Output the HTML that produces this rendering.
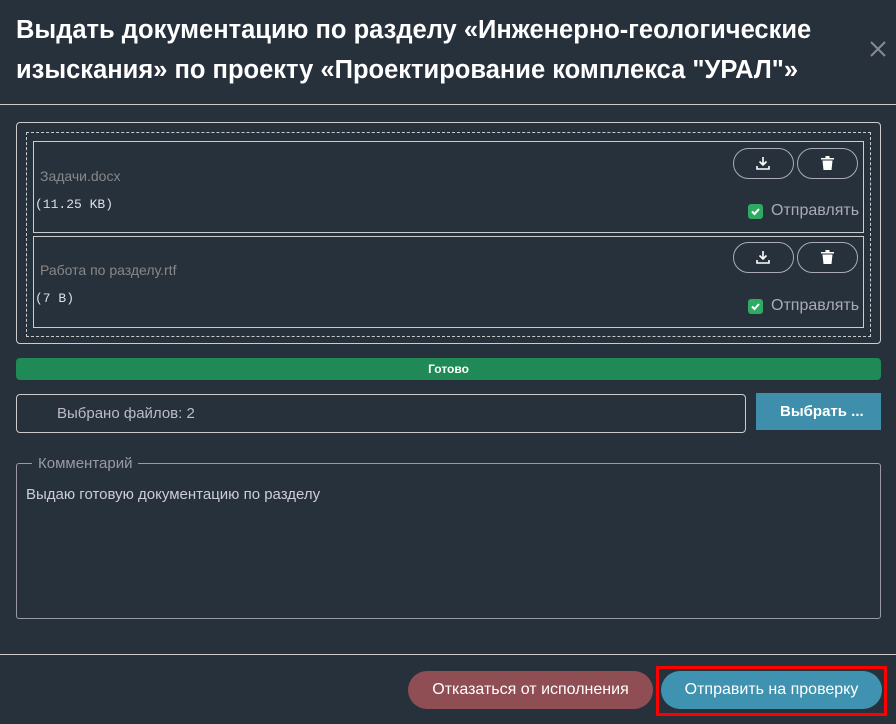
<!DOCTYPE html><html><head><style>
body{margin:0;width:896px;height:724px;background:#27313b;font-family:"Liberation Sans",sans-serif;position:relative;overflow:hidden;color:#fff}
.a{position:absolute;box-sizing:border-box}
.t{left:16px;top:10px;font-size:25.5px;font-weight:bold;line-height:40px;color:#fff;width:840px}
.pill{border:1px solid #aab;border-radius:16px;width:61px;height:31px}
.chk{width:15px;height:15px;background:#2eaa62;border-radius:3px}
.m{font-family:"Liberation Mono",monospace;font-size:13px;color:#dde}
</style></head><body>
<div class="a t">Выдать документацию по разделу «Инженерно-геологические изыскания» по проекту «Проектирование комплекса "УРАЛ"»</div>
<svg class="a" style="left:870px;top:41px" width="16" height="16"><path d="M1 1L15 15M15 1L1 15" stroke="#889" stroke-width="2"/></svg>
<div class="a" style="left:0;top:104px;width:896px;height:1px;background:#ccc"></div>
<div class="a" style="left:16px;top:122px;width:865px;height:222px;border:1px solid #ccc;border-radius:4px"></div>
<div class="a" style="left:26px;top:132px;width:845px;height:205px;border:1px dashed #ccc"></div>
<div class="a" style="left:33px;top:141px;width:831px;height:92px;border:1px solid #ccc"></div>
<div class="a" style="left:33px;top:236px;width:831px;height:92px;border:1px solid #ccc"></div>
<div class="a" style="left:40px;top:168px;font-size:14px;color:#888">Задачи.docx</div>
<div class="a m" style="left:35px;top:197px">(11.25 KB)</div>
<div class="a" style="left:40px;top:262px;font-size:14px;color:#888">Работа по разделу.rtf</div>
<div class="a m" style="left:35px;top:291px">(7 B)</div>
<div class="a pill" style="left:733px;top:148px"></div><div class="a pill" style="left:797px;top:148px"></div>
<div class="a pill" style="left:733px;top:242px"></div><div class="a pill" style="left:797px;top:242px"></div>
<svg class="a" style="left:756px;top:156px" width="14" height="14"><path d="M7 1V9M3.5 5.5L7 9L10.5 5.5M1 10V13H13V10" stroke="#fff" stroke-width="1.6" fill="none"/></svg>
<svg class="a" style="left:756px;top:250px" width="14" height="14"><path d="M7 1V9M3.5 5.5L7 9L10.5 5.5M1 10V13H13V10" stroke="#fff" stroke-width="1.6" fill="none"/></svg>
<svg class="a" style="left:821px;top:156px" width="13" height="14"><path d="M0 2H13V3.5H0ZM4.5 0H8.5V2H4.5ZM1.5 4.5H11.5L10.5 14H2.5Z" fill="#fff"/></svg>
<svg class="a" style="left:821px;top:250px" width="13" height="14"><path d="M0 2H13V3.5H0ZM4.5 0H8.5V2H4.5ZM1.5 4.5H11.5L10.5 14H2.5Z" fill="#fff"/></svg>
<div class="a chk" style="left:748px;top:204px"><svg width="15" height="15"><path d="M4 7.5L6.5 10L11 5" stroke="#fff" stroke-width="2" fill="none"/></svg></div><div class="a" style="left:771px;top:202px;font-size:16px;color:#aab">Отправлять</div>
<div class="a chk" style="left:748px;top:299px"><svg width="15" height="15"><path d="M4 7.5L6.5 10L11 5" stroke="#fff" stroke-width="2" fill="none"/></svg></div><div class="a" style="left:771px;top:297px;font-size:16px;color:#aab">Отправлять</div>
<div class="a" style="left:16px;top:358px;width:865px;height:22px;background:#1f8a56;border-radius:4px;font-size:12px;font-weight:bold;text-align:center;line-height:22px">Готово</div>
<div class="a" style="left:16px;top:394px;width:730px;height:39px;border:1px solid #ccc;border-radius:4px;font-size:15px;color:#bbc;padding:10px 0 0 40px">Выбрано файлов: 2</div>
<div class="a" style="left:756px;top:393px;width:125px;height:37px;background:#3f8fac;font-size:15px;font-weight:bold;line-height:37px;padding-left:24px">Выбрать ...</div>
<div class="a" style="left:16px;top:463px;width:865px;height:156px;border:1px solid #99a;border-radius:3px"></div>
<div class="a" style="left:32px;top:455px;background:#27313b;padding:0 6px;font-size:15px;color:#99a">Комментарий</div>
<div class="a" style="left:26px;top:486px;font-size:15px;color:#ccd">Выдаю готовую документацию по разделу</div>
<div class="a" style="left:0;top:654px;width:896px;height:1px;background:#ccc"></div>
<div class="a" style="left:408px;top:671px;width:245px;height:38px;background:#8f4d54;border-radius:19px;font-size:16px;text-align:center;line-height:38px">Отказаться от исполнения</div>
<div class="a" style="left:656px;top:666px;width:231px;height:50px;border:3px solid #f00"></div>
<div class="a" style="left:661px;top:671px;width:221px;height:38px;background:#3f93b0;border-radius:19px;font-size:16px;text-align:center;line-height:38px">Отправить на проверку</div>
</body></html>
